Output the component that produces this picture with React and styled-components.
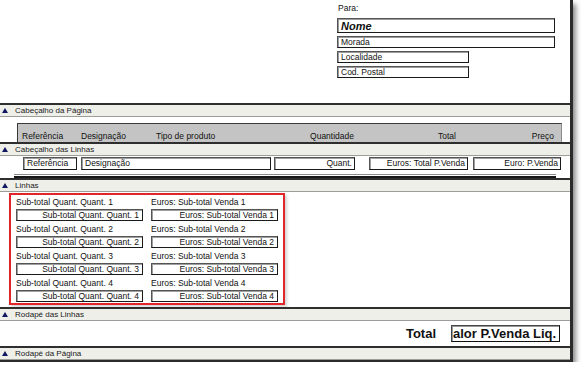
import React from 'react'
import { styled, createGlobalStyle } from 'styled-components'

const GlobalStyle = createGlobalStyle`
    body{
        margin: 0;
        background: #ffffff;
        font-family: "Liberation Sans", Arial, sans-serif;
        font-size: 8.5px;
        color: #111;
    }
`;

const lineTotals = [1, 2, 3, 4];

function Bar({ children }) {
    return (
        <BarStyled>
            <Arrow />
            <span>{children}</span>
        </BarStyled>
    )
}

function App() {
    return (
        <>
            <GlobalStyle />
            <Frame>
                <TopArea>
                    <Recipient>
                        <div className='para'>Para:</div>
                        <AddressBox $w={213} $h={13} $big>Nome</AddressBox>
                        <AddressBox $w={213} $h={10}>Morada</AddressBox>
                        <AddressBox $w={127} $h={10}>Localidade</AddressBox>
                        <AddressBox $w={127} $h={10}>Cod. Postal</AddressBox>
                    </Recipient>
                </TopArea>

                <Bar>Cabeçalho da Página</Bar>
                <PageHeaderArea>
                    <ColumnHeads>
                        <ColHead $w={59}>Referência</ColHead>
                        <ColHead $w={75}>Designação</ColHead>
                        <ColHead $w={110}>Tipo de produto</ColHead>
                        <ColHead $w={88} $right>Quantidade</ColHead>
                        <ColHead $w={102} $right>Total</ColHead>
                        <ColHead $w={98} $right>Preço</ColHead>
                    </ColumnHeads>
                </PageHeaderArea>

                <Bar>Cabeçalho das Linhas</Bar>
                <LinesHeaderArea>
                    <FieldRow>
                        <Field $w={54} $ml={23}>Referência</Field>
                        <Field $w={190} $ml={4}>Designação</Field>
                        <Field $w={81} $ml={3} $right>Quant.</Field>
                        <Field $w={99} $ml={14} $right>Euros: Total P.Venda</Field>
                        <Field $w={88} $ml={5} $right>Euro: P.Venda</Field>
                    </FieldRow>
                    <Rule />
                </LinesHeaderArea>

                <Bar>Linhas</Bar>
                <LinesArea>
                    <Selection>
                        {lineTotals.map((n) => (
                            <React.Fragment key={n}>
                                <Cell>
                                    <div className='label'>Sub-total Quant. Quant. {n}</div>
                                    <ValueBox>Sub-total Quant. Quant. {n}</ValueBox>
                                </Cell>
                                <Cell>
                                    <div className='label'>Euros: Sub-total Venda {n}</div>
                                    <ValueBox>Euros: Sub-total Venda {n}</ValueBox>
                                </Cell>
                            </React.Fragment>
                        ))}
                    </Selection>
                </LinesArea>

                <Bar>Rodapé das Linhas</Bar>
                <FooterArea>
                    <span className='total'>Total</span>
                    <TotalBox>alor P.Venda Liq.</TotalBox>
                </FooterArea>

                <Bar>Rodapé da Página</Bar>
            </Frame>
        </>
    )
}

const Frame = styled.div`
    width: 570px;
    height: 360px;
    background: #ffffff;
    border-right: 3px solid #2b2b2b;
    border-bottom: 2px solid #2b2b2b;
    box-shadow: 3px 4px 5px rgba(0, 0, 0, 0.45);
    display: flex;
    flex-direction: column;
    overflow: hidden;
`;

const TopArea = styled.div`
    height: 103px;
    flex-shrink: 0;
    display: flex;
    justify-content: flex-start;
`;

const Recipient = styled.div`
    margin-left: 337px;
    padding-top: 3px;
    display: flex;
    flex-direction: column;
    gap: 3px;

    .para{
        font-size: 8.5px;
        height: 10px;
        margin-bottom: 2px;
        padding-left: 1px;
    }
`;

const AddressBox = styled.div`
    width: ${({ $w }) => $w}px;
    height: ${({ $h }) => $h}px;
    border: 1px solid #1a1a1a;
    border-top-color: #555;
    border-left-color: #555;
    box-shadow: inset 1px 1px 0 #9a9a9a;
    padding-left: 3px;
    box-sizing: content-box;
    display: flex;
    align-items: center;
    font-size: ${({ $big }) => ($big ? '11px' : '8.5px')};
    font-weight: ${({ $big }) => ($big ? 700 : 400)};
    font-style: ${({ $big }) => ($big ? 'italic' : 'normal')};
`;

const BarStyled = styled.div`
    height: 11px;
    flex-shrink: 0;
    background: #efefea;
    border-top: 2px solid #2e2e2e;
    border-bottom: 1px solid #9c9c98;
    display: flex;
    align-items: center;
    gap: 7px;
    padding-left: 2px;
    font-size: 8px;
    color: #1a1a1a;
`;

const Arrow = styled.i`
    width: 0;
    height: 0;
    border-left: 3px solid transparent;
    border-right: 3px solid transparent;
    border-bottom: 5px solid #101860;
`;

const PageHeaderArea = styled.div`
    height: 25px;
    flex-shrink: 0;
    padding: 6px 0 0 17px;
    box-sizing: border-box;
`;

const ColumnHeads = styled.div`
    width: 533px;
    height: 17px;
    background: #c4c4c4;
    border: 1px solid #8a8a8a;
    border-top-color: #3a3a3a;
    border-left-color: #3a3a3a;
    display: flex;
    align-items: flex-end;
    padding: 0 6px 1px 4px;
    box-sizing: content-box;
`;

const ColHead = styled.div`
    width: ${({ $w }) => $w}px;
    text-align: ${({ $right }) => ($right ? 'right' : 'left')};
    font-size: 8.5px;
    white-space: nowrap;
`;

const LinesHeaderArea = styled.div`
    height: 22px;
    flex-shrink: 0;
    padding-top: 1px;
    box-sizing: border-box;
    display: flex;
    flex-direction: column;
    gap: 4px;
`;

const FieldRow = styled.div`
    display: flex;
`;

const Field = styled.div`
    width: ${({ $w }) => $w}px;
    margin-left: ${({ $ml }) => $ml}px;
    border: 1px solid #1a1a1a;
    border-top-color: #555;
    border-left-color: #555;
    box-shadow: inset 1px 1px 0 #a0a0a0;
    padding: 0 2px 0 3px;
    box-sizing: border-box;
    height: 13px;
    line-height: 11px;
    font-size: 8.5px;
    text-align: ${({ $right }) => ($right ? 'right' : 'left')};
    white-space: nowrap;
    overflow: hidden;
`;

const Rule = styled.div`
    margin-left: 14px;
    width: 542px;
    height: 1px;
    border-top: 1px solid #8c8c8c;
    border-bottom: 2px solid #161616;
`;

const LinesArea = styled.div`
    height: 115px;
    flex-shrink: 0;
    padding: 1px 0 0 9px;
    box-sizing: border-box;
`;

const Selection = styled.div`
    width: 276px;
    height: 112px;
    box-sizing: border-box;
    border: 2px solid #e0262a;
    box-shadow: 2px 2px 3px rgba(0, 0, 0, 0.18);
    display: grid;
    grid-template-columns: 127px 127px;
    grid-auto-rows: 23px;
    column-gap: 8px;
    row-gap: 4px;
    padding: 3px 0 0 5px;
`;

const Cell = styled.div`
    display: flex;
    flex-direction: column;
    gap: 2px;

    .label{
        font-size: 8.5px;
        height: 9px;
        line-height: 9px;
        white-space: nowrap;
    }
`;

const ValueBox = styled.div`
    height: 10px;
    border: 1px solid #1a1a1a;
    border-top-color: #555;
    border-left-color: #555;
    box-shadow: inset 1px 1px 0 #a0a0a0;
    padding-right: 3px;
    text-align: right;
    line-height: 11px;
    font-size: 8.5px;
    white-space: nowrap;
`;

const FooterArea = styled.div`
    height: 25px;
    flex-shrink: 0;
    display: flex;
    align-items: center;
    justify-content: flex-end;
    gap: 15px;
    padding-right: 10px;

    .total{
        font-size: 13px;
        font-weight: 700;
    }
`;

const TotalBox = styled.div`
    width: 106px;
    height: 15px;
    border: 1px solid #111;
    border-top-color: #444;
    border-left-color: #444;
    box-shadow: inset 1px 1px 0 #999;
    font-size: 13px;
    font-weight: 700;
    line-height: 15px;
    padding-left: 1px;
    white-space: nowrap;
    overflow: hidden;
`;

export default App
